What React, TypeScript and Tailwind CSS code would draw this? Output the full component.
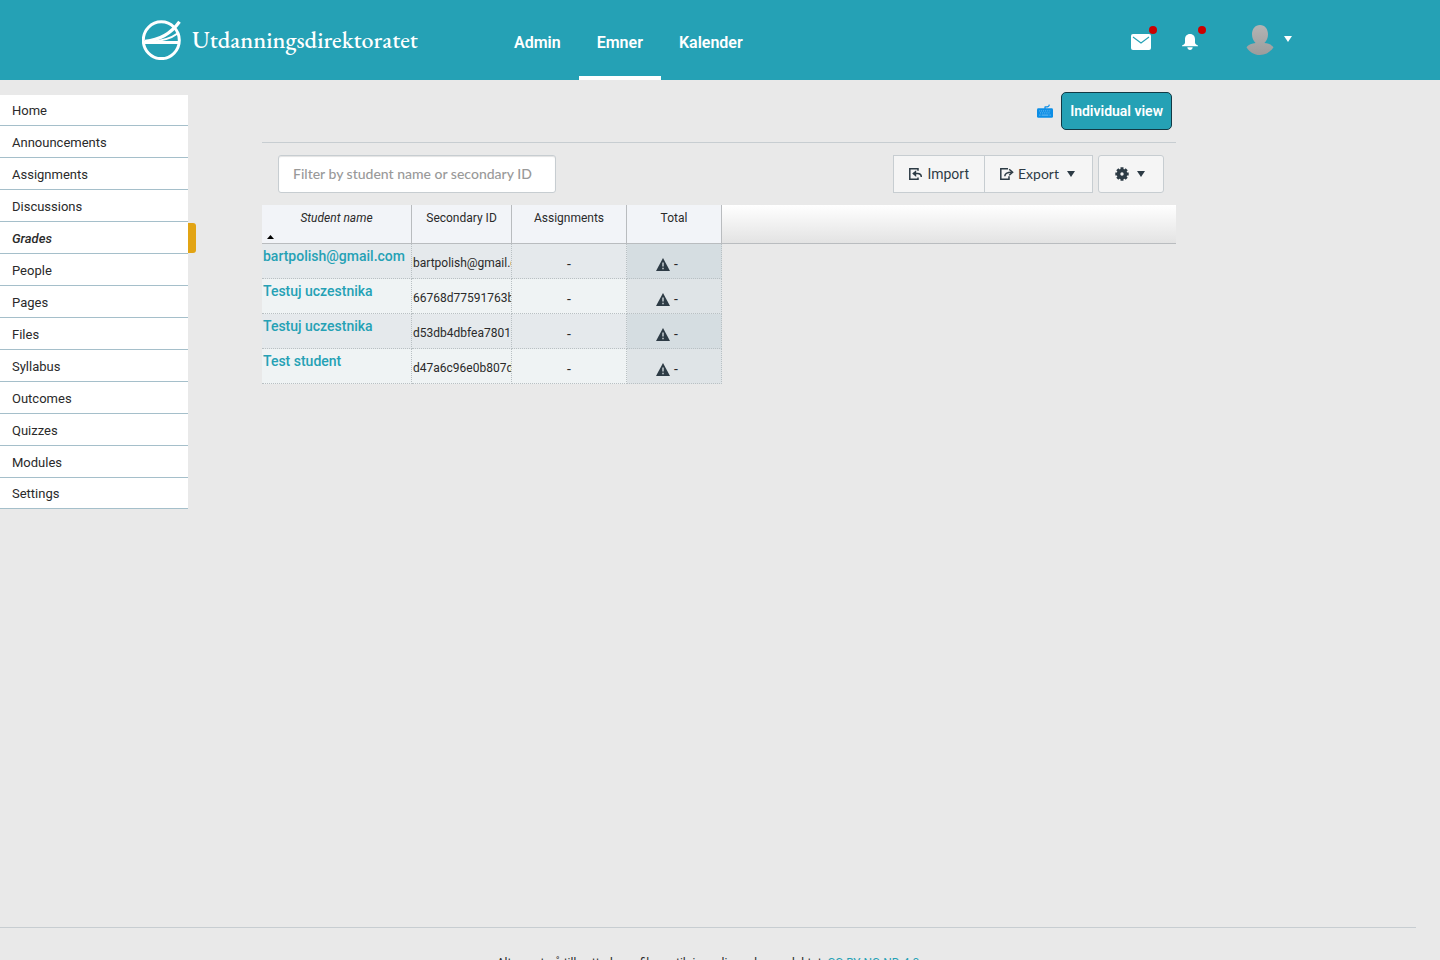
import React from "react";

const courseLinks = [
  "Home",
  "Announcements",
  "Assignments",
  "Discussions",
  "Grades",
  "People",
  "Pages",
  "Files",
  "Syllabus",
  "Outcomes",
  "Quizzes",
  "Modules",
  "Settings",
];

const students = [
  { name: "bartpolish@gmail.com", id: "bartpolish@gmail.com" },
  { name: "Testuj uczestnika", id: "66768d77591763b2" },
  { name: "Testuj uczestnika", id: "d53db4dbfea78019" },
  { name: "Test student", id: "d47a6c96e0b807d1" },
];

function Logo() {
  return (
    <svg className="h-10 w-10" viewBox="0 0 40 40" fill="none" stroke="#fff" aria-hidden="true">
      <ellipse cx="19.3" cy="20.2" rx="18" ry="18.4" strokeWidth="3" />
      <path d="M2 22.4H37.5" strokeWidth="3" />
      <path d="M3 21.3C18 20.2 29 13.5 37.5 1.8" strokeWidth="3.2" />
      <path d="M8 21.8C20 21 29 18.5 35.5 13.5" strokeWidth="2" />
    </svg>
  );
}

function Caret({ className = "" }: { className?: string }) {
  return (
    <svg className={className} width="8" height="6" viewBox="0 0 8 6" fill="currentColor" aria-hidden="true">
      <path d="M0 0H8L4 6Z" />
    </svg>
  );
}

function Mail() {
  return (
    <svg width="20" height="16" viewBox="0 0 20 16" aria-hidden="true">
      <rect width="20" height="16" rx="2" fill="#fff" />
      <path d="M2 3L10 9L18 3" fill="none" stroke="#25a1b5" strokeWidth="1.1" />
    </svg>
  );
}

function Bell() {
  return (
    <svg width="16" height="16" viewBox="0 0 16 16" fill="#fff" aria-hidden="true">
      <path d="M8 0C4.7 0 3 2.3 3 5.2V8.5C3 10 1.6 10.8 0 11.5V12.3H16V11.5C14.4 10.8 13 10 13 8.5V5.2C13 2.3 11.3 0 8 0Z" />
      <path d="M5.3 13.3H10.7C10.4 15 9.5 16 8 16S5.6 15 5.3 13.3Z" />
    </svg>
  );
}

function Avatar() {
  return (
    <svg width="28" height="30" viewBox="0 0 28 30" aria-hidden="true">
      <defs>
        <linearGradient id="avatar-fill" x1="0" y1="0" x2="0" y2="1">
          <stop offset="0" stopColor="#b4b4b4" />
          <stop offset="1" stopColor="#9c9c9c" />
        </linearGradient>
      </defs>
      <path
        d="M14 0C9 0 6 4.2 6 9.3C6 13 7.4 16.2 9.6 18C6 18.3 2.3 19.6 .5 22.2C3.4 26.9 8.2 30 14 30S24.6 26.9 27.5 22.2C25.7 19.6 22 18.3 18.4 18C20.6 16.2 22 13 22 9.3C22 4.2 19 0 14 0Z"
        fill="url(#avatar-fill)"
      />
    </svg>
  );
}

function Keyboard() {
  return (
    <svg width="16" height="14" viewBox="0 0 16 14" aria-hidden="true">
      <path d="M8 5V3.3C8 2.4 9.5 3.2 11 2.6C12.1 2.2 12.2 1.4 12.3 .7" fill="none" stroke="#0c8ee6" strokeWidth="1.3" />
      <rect y="4.2" width="16" height="9.6" rx="1.4" fill="#0c8ee6" />
      <path d="M2.2 6.9H13.8M3 8.9H13" stroke="#7cc3f3" strokeWidth=".9" strokeDasharray="1 .9" />
      <path d="M2.2 11.1H3.6M4.6 11.1H11.4M12.4 11.1H13.8" stroke="#7cc3f3" strokeWidth=".9" />
    </svg>
  );
}

function ImportIcon() {
  return (
    <svg width="14" height="12" viewBox="0 0 14 12" fill="none" stroke="currentColor" strokeWidth="1.5" aria-hidden="true">
      <path d="M9 2.8V.8H.8V11.2H9V9.6" />
      <path d="M4.5 5.6H8.5C11 5.6 12.3 6.8 12.3 9" />
      <path d="M7.2 2.2V9L3.2 5.6Z" fill="currentColor" stroke="none" />
    </svg>
  );
}

function ExportIcon() {
  return (
    <svg width="14" height="12" viewBox="0 0 14 12" fill="none" stroke="currentColor" strokeWidth="1.5" aria-hidden="true">
      <path d="M8 .8H.8V11.2H9V8.2" />
      <path d="M4.8 8.2C4.8 5.4 6.5 4.2 11.8 4.2" />
      <path d="M9.2 1.2L12.6 4.2L9.2 7.2" />
    </svg>
  );
}

function Gear() {
  return (
    <svg width="14" height="14" viewBox="0 0 14 14" aria-hidden="true">
      <g stroke="currentColor" strokeWidth="3">
        <path d="M7 .3V3M7 11V13.7M.3 7H3M11 7H13.7M2.3 2.3L4 4M10 10L11.7 11.7M11.7 2.3L10 4M4 10L2.3 11.7" />
      </g>
      <circle cx="7" cy="7" r="3.5" fill="none" stroke="currentColor" strokeWidth="3.6" />
    </svg>
  );
}

function Warning() {
  return (
    <svg width="14" height="13" viewBox="0 0 14 13" aria-hidden="true">
      <path d="M7 0L14 13H0Z" fill="#2d3b45" />
      <path d="M7 4.5V8.6M7 9.8V11.2" stroke="#dce3e6" strokeWidth="1.3" />
    </svg>
  );
}

const headCell = "h-[39px] border-r border-b border-[#b9bcbf] bg-[#f2f4f8] pt-[5px] align-top text-xs leading-4 font-normal";
const bodyCell = "h-[35px] border-r border-b border-dotted border-[#b9c0c3] p-0";
const navLink = "flex h-20 items-center border-b-4 px-[18px] pt-2.5";
const toolButton = "flex h-[38px] items-center border border-[#c7cdd1] bg-[#f5f5f5] text-[#2d3b45]";

export default function App() {
  return (
    <div className="flex h-screen flex-col overflow-hidden bg-[#e9e9e9] font-['Roboto',sans-serif] text-[#2a2a2a]">
      <header className="flex h-20 shrink-0 items-center bg-[#25a1b5] pr-[148px] pl-[142px] text-white">
        <a href="#" className="flex w-[354px] shrink-0 items-center gap-2.5">
          <Logo />
          <span className="font-['EB_Garamond','Liberation_Serif',serif] text-2xl font-medium">Utdanningsdirektoratet</span>
        </a>
        <nav className="flex text-base font-semibold">
          <a href="#" className={navLink + " border-transparent"}>Admin</a>
          <a href="#" className={navLink + " border-white"}>Emner</a>
          <a href="#" className={navLink + " border-transparent"}>Kalender</a>
        </nav>
        <div className="ml-auto flex items-center">
          <button type="button" aria-label="Inbox" className="relative mt-1 mr-[31px]">
            <Mail />
            <span className="absolute -top-2 -right-1.5 size-2 rounded-full bg-[#cc0000]" />
          </button>
          <button type="button" aria-label="Notifications" className="relative mt-1 mr-12">
            <Bell />
            <span className="absolute -top-2 -right-2 size-2 rounded-full bg-[#cc0000]" />
          </button>
          <button type="button" aria-label="Account" className="flex items-center gap-2.5">
            <Avatar />
            <Caret className="mb-0.5" />
          </button>
        </div>
      </header>

      <div className="flex flex-1">
        <nav className="w-[188px] shrink-0 pt-[15px] text-[13px]">
          <ul>
            {courseLinks.map((label) => (
              <li key={label} className="relative h-8 border-b border-[#a5bfca] bg-white first:h-[31px] last:h-[31px]">
                <a href="#" className={"flex h-full items-center pt-0.5 pl-3 " + (label === "Grades" ? "font-medium italic" : "")}>
                  {label}
                </a>
                {label === "Grades" && (
                  <span className="absolute top-px left-full h-[30px] w-2 rounded-r-[3px] bg-[#e2a414]" />
                )}
              </li>
            ))}
          </ul>
        </nav>

        <main className="min-w-0 flex-1 pr-[264px] pl-[74px]">
          <div className="flex h-[63px] items-center justify-end gap-2 border-b border-[#c7cdd1] pr-1">
            <button type="button" aria-label="Keyboard shortcuts">
              <Keyboard />
            </button>
            <a
              href="#"
              className="flex h-[38px] items-center rounded-[5px] border border-[#123944] bg-[#25a1b5] px-2 text-sm font-semibold text-white"
            >
              Individual view
            </a>
          </div>

          <div className="flex justify-between pt-3 pr-3 pb-3 pl-4">
            <input
              type="text"
              aria-label="Filter by student name or secondary ID"
              placeholder="Filter by student name or secondary ID"
              className="h-[38px] w-[278px] rounded-[3px] border border-[#c7cdd1] bg-white px-3.5 pb-0.5 font-['Lato',sans-serif] text-sm font-medium shadow-[inset_0_1px_1px_#e3e3e3] placeholder:text-[#999]"
            />
            <div className="flex">
              <button type="button" className={toolButton + " gap-1 px-[15px] text-sm"}>
                <ImportIcon />
                Import
              </button>
              <button type="button" className={toolButton + " -ml-px px-[15px] font-['Lato',sans-serif] text-sm"}>
                <ExportIcon />
                <span className="mr-2 ml-1">Export</span>
                <Caret className="mr-0.5" />
              </button>
              <button type="button" aria-label="Gradebook settings" className={toolButton + " ml-[5px] gap-2 rounded-[3px] px-4"}>
                <Gear />
                <Caret className="mr-0.5" />
              </button>
            </div>
          </div>

          <table className="w-full table-fixed border-separate border-spacing-0">
            <colgroup>
              <col className="w-[150px]" />
              <col className="w-[100px]" />
              <col className="w-[115px]" />
              <col className="w-[95px]" />
              <col />
            </colgroup>
            <thead>
              <tr>
                <th scope="col" className={headCell + " relative italic"}>
                  Student name
                  <svg className="absolute bottom-1 left-[5px]" width="7" height="4" viewBox="0 0 7 4" aria-hidden="true">
                    <path d="M3.5 0L7 4H0Z" />
                  </svg>
                </th>
                <th scope="col" className={headCell}>Secondary ID</th>
                <th scope="col" className={headCell}>Assignments</th>
                <th scope="col" className={headCell}>Total</th>
                <td className="border-b border-[#b9bcbf] bg-linear-to-b from-white to-[#e3e3e3]" />
              </tr>
            </thead>
            <tbody>
              {students.map((student, i) => (
                <tr key={student.id} className={i % 2 === 0 ? "bg-[#e5e9ec]" : "bg-[#eff3f4]"}>
                  <td className={bodyCell + " pl-px align-top text-sm leading-6 font-medium whitespace-nowrap"}>
                    <a href="#" className="text-[#25a1b5]">{student.name}</a>
                  </td>
                  <td className={bodyCell + " overflow-hidden pt-1 pl-px text-xs whitespace-nowrap"}>{student.id}</td>
                  <td className={bodyCell + " pt-1.5 text-center text-sm"}>-</td>
                  <td className={bodyCell + (i % 2 === 0 ? " bg-[#d5dde1]" : " bg-[#dfe4e7]")}>
                    <div className="flex items-center justify-center gap-1 pt-1.5 pr-3.5 text-sm">
                      <Warning />
                      <span>-</span>
                    </div>
                  </td>
                  <td className="bg-[#e9e9e9]" />
                </tr>
              ))}
            </tbody>
          </table>
        </main>
      </div>

      <footer className="mr-6 h-[33px] shrink-0 border-t border-[#c7cdd1] pt-[25px] text-center text-xs leading-5">
        Alt annet på tilknyttede profiler er tilgjengelig under produktet:{" "}
        <a href="#" className="text-[#25a1b5]">CC BY-NC-ND 4.0</a>
      </footer>
    </div>
  );
}
